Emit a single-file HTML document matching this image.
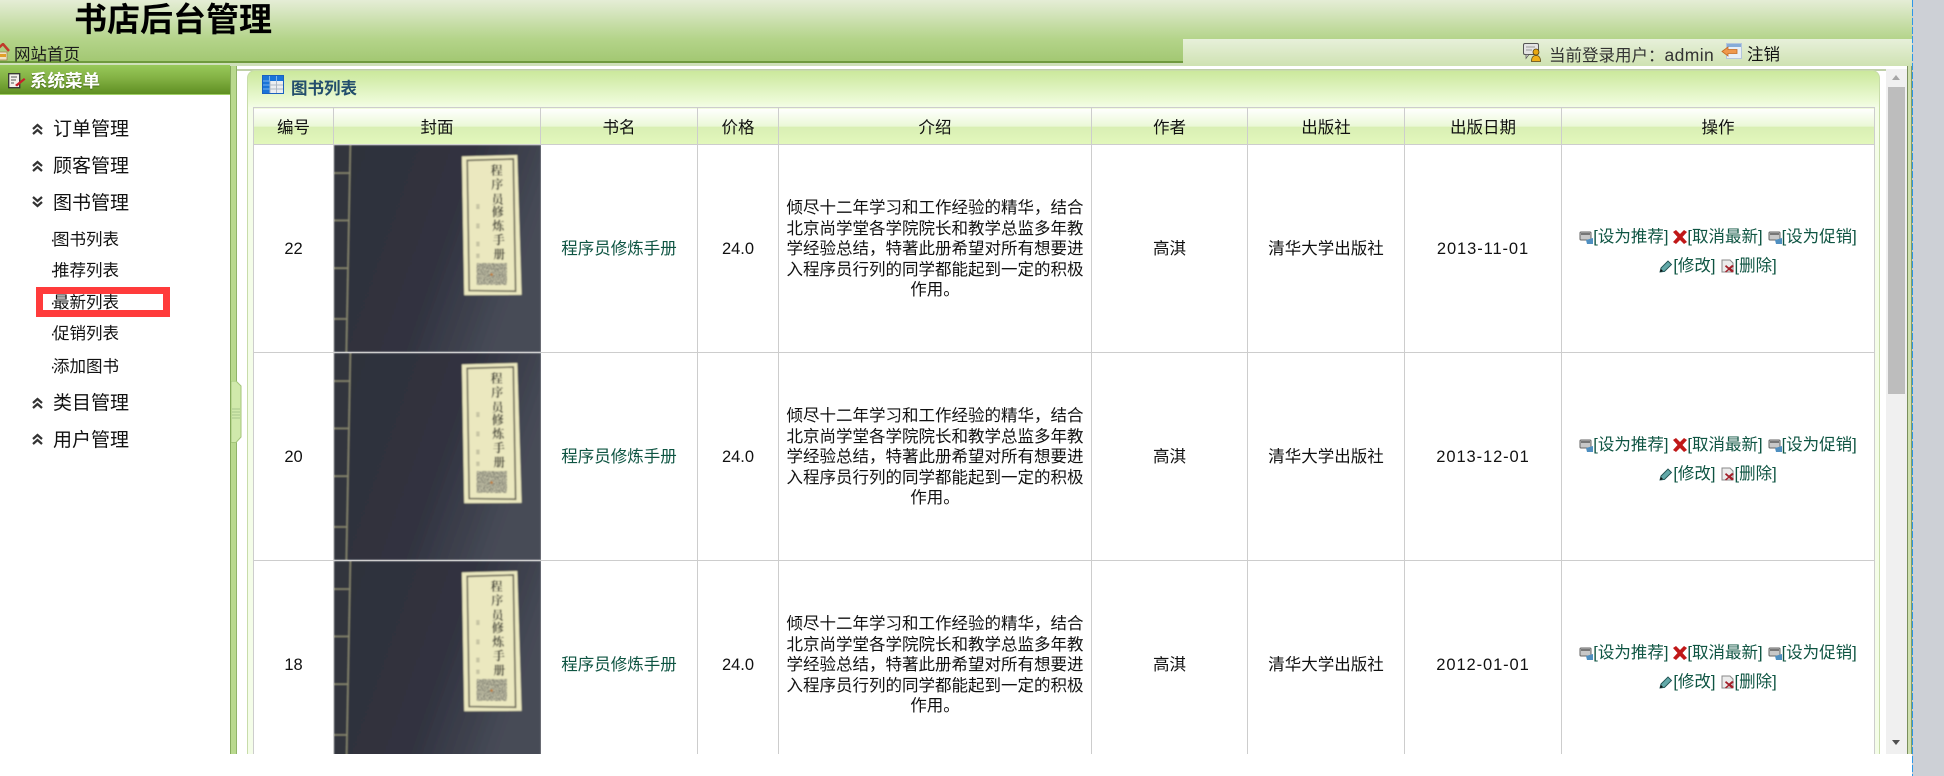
<!DOCTYPE html>
<html lang="zh-CN">
<head>
<meta charset="utf-8">
<title>书店后台管理</title>
<style>
html,body{margin:0;padding:0;width:1944px;height:776px;overflow:hidden;background:#fff}
body{position:relative;font-family:"Liberation Sans","Noto Sans CJK SC",sans-serif;font-size:16.5px;color:#111}
.a{position:absolute}
.t{position:absolute;white-space:nowrap;line-height:24px}
#page{position:absolute;left:0;top:0;width:1913px;height:754px;overflow:hidden;background:#fff}
#tbl{position:absolute;left:253px;top:107px;border-collapse:collapse;table-layout:fixed;width:1621px}
#tbl th,#tbl td{border:1px solid #cdcdcd;text-align:center;padding:0;font-weight:400;white-space:nowrap}
#tbl th{height:36px;background:linear-gradient(#fff 0,#eaf8d6 50%,#d9efb4 51%,#e3f8bc 100%);color:#111}
#tbl td{height:205px;padding-top:2px;line-height:20.5px;background:#fff}
#tbl td.c{padding:0;height:207px;vertical-align:top}
#tbl td svg.cv{display:block;width:207px;height:207px}
#tbl a{color:#0e5442;text-decoration:none}
#tbl td.ops{line-height:29.5px;padding-top:7px;height:200px}
#tbl td.d{letter-spacing:.9px}
.ops svg{vertical-align:-2px}
.ops span{margin-left:5px}
.m{font-size:19px}
.s{font-size:16.5px}
.s b{font-weight:400;letter-spacing:-2.5px}
.chev{position:absolute;left:32px;width:11px;height:12px}
</style>
</head>
<body>
<svg width="0" height="0" style="position:absolute">
<defs>
<linearGradient id="cg" x1="0" y1="0" x2="1" y2="0.35">
<stop offset="0" stop-color="#2e303a"/><stop offset=".6" stop-color="#30323f"/><stop offset="1" stop-color="#474b57"/>
</linearGradient>
<filter id="bl" x="-5%" y="-5%" width="110%" height="110%"><feGaussianBlur stdDeviation="2"/></filter>
<filter id="qr" x="0" y="0" width="100%" height="100%">
<feTurbulence type="fractalNoise" baseFrequency=".3" numOctaves="2" seed="4"/>
<feColorMatrix values="0 0 0 0 .2 0 0 0 0 .2 0 0 0 0 .16 8 8 0 0 -7.500"/>
<feComposite in2="SourceGraphic" operator="over"/>
</filter>
<g id="cb">
<rect width="620" height="620" fill="url(#cg)"/>
<rect x="0" width="46" height="620" fill="#31343d"/>
<path d="M49 0L37 620" stroke="#8d8c72" stroke-width="4" fill="none"/>
<path d="M0 84H47M0 226H45M0 369H42M0 521H40" stroke="#8d8c72" stroke-width="4" fill="none"/>
<path d="M383 34L549 30L562 449L390 450Z" fill="#ebe8bf"/>
<path d="M399 46L537 42L544 438L405 436Z" fill="none" stroke="#6d6b58" stroke-width="5"/>
<rect x="427" y="354" width="90" height="64" fill="#c8c6aa" filter="url(#qr)"/>
<circle cx="472" cy="388" r="4" fill="#c17a30"/>
<path d="M431 178v14M431 236v14M431 290v14M431 326v12" stroke="#aaa88e" stroke-width="10" stroke-dasharray="3 2"/>
</g>
<g id="ibk"><rect x="1" y="2" width="11" height="8" rx="1" fill="#c8c8c8" stroke="#666"/><rect x="2" y="3" width="9" height="2" fill="#777"/><path d="M7 10l7-2v6H8z" fill="#4f8fc0"/></g>
<g id="ix"><path d="M0 2L3 0l4 4 4-4 3 2-4.500 5L14 12l-3 2-4-4-4 4-3-2 4.500-5z" fill="#c01818"/></g>
<g id="ied"><path d="M1 13l1-4L9 2l3.500 3.500L5.500 12.500z" fill="#63a9a9" stroke="#1c4f4f" stroke-width=".9"/><path d="M1 13l1-3 2 2z" fill="#111"/></g>
<g id="idl"><path d="M1 1h8l3 3v9H1z" fill="#ececec" stroke="#888"/><path d="M5 6l3 2.500L11 6l2 1-3 2.500L13 12l-2 1.500-3-2.500-3 2.500-1-1 3-2.500-3-2.500z" fill="#a3202a"/></g>
</defs>
</svg>

<div id="page">
  <!-- header -->
  <div class="a" style="left:0;top:0;width:1913px;height:62px;background:linear-gradient(#e5edd6 0,#b4d48a 39px,#a3c873 61px)"></div>
  <div class="a" style="left:0;top:61px;width:1183px;height:2px;background:#6f9a3e"></div>
  <div class="a" style="left:0;top:63px;width:1183px;height:3px;background:#cfe0ba"></div>
  <div class="a" style="left:1183px;top:39px;width:730px;height:27px;background:linear-gradient(#e7f0da,#cfe2b2)"></div>
  <div class="a" style="left:0;top:66px;width:1913px;height:3px;background:#fff"></div>
  <div class="a" style="left:230px;top:69px;width:1683px;height:2px;background:#bfcfa8"></div>
  <div class="t" style="left:74px;top:0;font-size:33px;line-height:40px;font-weight:700;color:#000">书店后台管理</div>
  <svg class="a" style="left:0;top:43px" width="10" height="18" viewBox="0 0 10 18"><path d="M-6 9L3 1l6 7" fill="none" stroke="#c03a2a" stroke-width="2.500"/><rect x="-5" y="9" width="12" height="8" fill="#f0e4c4" stroke="#9a7a40" stroke-width=".7"/><rect x="0" y="11" width="6" height="3" fill="#e0a028"/></svg>
  <div class="a" style="left:14px;top:43px;width:70px;height:20px;overflow:hidden"><div class="t" style="left:0;top:0;color:#1a1a1a">网站首页</div></div>
  <!-- user -->
  <svg class="a" style="left:1523px;top:43px" width="20" height="19" viewBox="0 0 20 19"><rect x=".5" y=".5" width="15" height="11" rx="1.500" fill="#e4e4e4" stroke="#555"/><path d="M3 11.500v4l3-4z" fill="#ddd" stroke="#555" stroke-width=".7"/><path d="M3 4h9M3 7h6" stroke="#9a9a9a"/><circle cx="13" cy="9" r="3" fill="#e8a814" stroke="#5a4410" stroke-width=".8"/><path d="M8.500 18.500c0-4.500 1.500-6 4.500-6s4.500 1.500 4.500 6z" fill="#f0b018" stroke="#5a4410" stroke-width=".8"/></svg>
  <div class="t" style="left:1549px;top:43px;color:#333">当前登录用户&#xFF1A;<span style="font-size:17.5px;letter-spacing:.4px">admin</span></div>
  <svg class="a" style="left:1721px;top:43px" width="21" height="17" viewBox="0 0 21 17"><rect x="5.500" y=".5" width="15" height="15" fill="#e8eff7" stroke="#b4c6dc"/><rect x="6" y="1" width="14" height="3" fill="#86acd8"/><path d="M1 8.500l6-4.500v2.500h9v4H7V13z" fill="#f0984c" stroke="#c46a20" stroke-width=".8"/></svg>
  <div class="t" style="left:1747px;top:43px;color:#111">注销</div>

  <!-- sidebar -->
  <div class="a" style="left:0;top:65px;width:230px;height:29px;background:linear-gradient(#98c95a,#83b144 45%,#5f8f22);border-bottom:1px solid #a1d065"></div>
  <svg class="a" style="left:8px;top:73px" width="18" height="16" viewBox="0 0 18 16"><rect x=".7" y=".7" width="11" height="14" fill="#f4f2ec" stroke="#333" stroke-width="1.300"/><path d="M3 4h6M3 7h5M3 10h3" stroke="#555"/><path d="M7 12l9-7 1.500 1.500L9 13.500z" fill="#c8202a"/></svg>
  <div class="t" style="left:30px;top:69px;color:#fff;font-weight:700;font-size:17.500px;text-shadow:0 1px 1px #4a6c1a">系统菜单</div>

  <svg class="chev" style="top:123px" viewBox="0 0 11 12"><path d="M1 6l4.500-4L10 6M1 11l4.500-4L10 11" fill="none" stroke="#333" stroke-width="2.200"/></svg>
  <div class="t m" style="left:53px;top:118px">订单管理</div>
  <svg class="chev" style="top:160px" viewBox="0 0 11 12"><path d="M1 6l4.500-4L10 6M1 11l4.500-4L10 11" fill="none" stroke="#333" stroke-width="2.200"/></svg>
  <div class="t m" style="left:53px;top:155px">顾客管理</div>
  <svg class="chev" style="top:196px" viewBox="0 0 11 12"><path d="M1 1l4.500 4L10 1M1 6l4.500 4L10 6" fill="none" stroke="#333" stroke-width="2.200"/></svg>
  <div class="t m" style="left:53px;top:192px">图书管理</div>

  <div class="a" style="left:36px;top:287px;width:120px;height:16px;border:7px solid #ff3b3b;background:#fff"></div>

  <div class="t s" style="left:50px;top:228px"><b>·</b>图书列表</div>
  <div class="t s" style="left:50px;top:259px"><b>·</b>推荐列表</div>
  <div class="t s" style="left:50px;top:291px"><b>·</b>最新列表</div>
  <div class="t s" style="left:50px;top:322px"><b>·</b>促销列表</div>
  <div class="t s" style="left:50px;top:355px"><b>·</b>添加图书</div>

  <svg class="chev" style="top:397px" viewBox="0 0 11 12"><path d="M1 6l4.500-4L10 6M1 11l4.500-4L10 11" fill="none" stroke="#333" stroke-width="2.200"/></svg>
  <div class="t m" style="left:53px;top:392px">类目管理</div>
  <svg class="chev" style="top:433px" viewBox="0 0 11 12"><path d="M1 6l4.500-4L10 6M1 11l4.500-4L10 11" fill="none" stroke="#333" stroke-width="2.200"/></svg>
  <div class="t m" style="left:53px;top:429px">用户管理</div>

  <!-- splitter -->
  <div class="a" style="left:230px;top:66px;width:1px;height:688px;background:#86ab5c"></div>
  <div class="a" style="left:231px;top:66px;width:5px;height:688px;background:#b9d98e"></div>
  <div class="a" style="left:236px;top:66px;width:1px;height:688px;background:#8fb368"></div>
  <svg class="a" style="left:231px;top:381px" width="11" height="64" viewBox="0 0 11 64"><path d="M0 0H5L10 5V56L5 61.500H0Z" fill="#d0e9ab" stroke="#a4c67a"/><path d="M1 28H9M1 31H9M1 34H9M1 37H9" stroke="#a9c68c"/></svg>

  <!-- panel -->
  <div class="a" style="left:247px;top:70px;width:1633px;height:700px;box-sizing:border-box;border:1px solid #c8dcaa;border-bottom:0;border-radius:8px 8px 0 0;background:linear-gradient(#cbe89c 0,#ecfad6 30px,#f4fde8 37px,#f4fde8 100%)"></div>
  <svg class="a" style="left:262px;top:75px" width="22" height="19" viewBox="0 0 22 19"><rect x=".5" y=".5" width="21" height="18" fill="#1a74d8" stroke="#1a60c0"/><rect x="8" y="6" width="13" height="12" fill="#eceef0"/><path d="M8 6V18M14.500 6V18M8 10H21M8 14H21" stroke="#aeb8c4"/><path d="M1 6H8M1 10H8M1 14H8M7.500 1V6M14.500 1V6" stroke="#7cb4ee"/></svg>
  <div class="t" style="left:291px;top:77px;font-weight:700;color:#234e6c">图书列表</div>

  <table id="tbl">
    <colgroup><col style="width:80px"><col style="width:207px"><col style="width:157px"><col style="width:81px"><col style="width:313px"><col style="width:156px"><col style="width:157px"><col style="width:157px"><col style="width:313px"></colgroup>
    <tr><th>编号</th><th>封面</th><th>书名</th><th>价格</th><th>介绍</th><th>作者</th><th>出版社</th><th>出版日期</th><th>操作</th></tr>
    <tr>
      <td>22</td>
      <td class="c"><svg class="cv" viewBox="0 0 620 620"><g filter="url(#bl)"><use href="#cb"/><g font-family="'Noto Serif CJK SC',serif" font-size="36" font-weight="700" fill="#3a3a30" text-anchor="middle"><text x="487" y="88">程</text><text x="489" y="130">序</text><text x="490" y="175">员</text><text x="491" y="212">修</text><text x="492" y="255">炼</text><text x="494" y="296">手</text><text x="495" y="340">册</text></g></g></svg></td>
      <td><a>程序员修炼手册</a></td>
      <td>24.0</td>
      <td>倾尽十二年学习和工作经验的精华&#xFF0C;结合<br>北京尚学堂各学院院长和教学总监多年教<br>学经验总结&#xFF0C;特著此册希望对所有想要进<br>入程序员行列的同学都能起到一定的积极<br>作用。</td>
      <td>高淇</td>
      <td>清华大学出版社</td>
      <td class="d">2013-11-01</td>
      <td class="ops"><a><svg width="14" height="14" viewBox="0 0 14 14"><use href="#ibk"/></svg>[设为推荐]</a><span></span><a><svg width="14" height="14" viewBox="0 0 14 14"><use href="#ix"/></svg>[取消最新]</a><span></span><a><svg width="14" height="14" viewBox="0 0 14 14"><use href="#ibk"/></svg>[设为促销]</a><br><a><svg width="14" height="14" viewBox="0 0 14 14"><use href="#ied"/></svg>[修改]</a><span></span><a><svg width="14" height="14" viewBox="0 0 14 14"><use href="#idl"/></svg>[删除]</a></td>
    </tr>
    <tr>
      <td>20</td>
      <td class="c"><svg class="cv" viewBox="0 0 620 620"><g filter="url(#bl)"><use href="#cb"/><g font-family="'Noto Serif CJK SC',serif" font-size="36" font-weight="700" fill="#3a3a30" text-anchor="middle"><text x="487" y="88">程</text><text x="489" y="130">序</text><text x="490" y="175">员</text><text x="491" y="212">修</text><text x="492" y="255">炼</text><text x="494" y="296">手</text><text x="495" y="340">册</text></g></g></svg></td>
      <td><a>程序员修炼手册</a></td>
      <td>24.0</td>
      <td>倾尽十二年学习和工作经验的精华&#xFF0C;结合<br>北京尚学堂各学院院长和教学总监多年教<br>学经验总结&#xFF0C;特著此册希望对所有想要进<br>入程序员行列的同学都能起到一定的积极<br>作用。</td>
      <td>高淇</td>
      <td>清华大学出版社</td>
      <td class="d">2013-12-01</td>
      <td class="ops"><a><svg width="14" height="14" viewBox="0 0 14 14"><use href="#ibk"/></svg>[设为推荐]</a><span></span><a><svg width="14" height="14" viewBox="0 0 14 14"><use href="#ix"/></svg>[取消最新]</a><span></span><a><svg width="14" height="14" viewBox="0 0 14 14"><use href="#ibk"/></svg>[设为促销]</a><br><a><svg width="14" height="14" viewBox="0 0 14 14"><use href="#ied"/></svg>[修改]</a><span></span><a><svg width="14" height="14" viewBox="0 0 14 14"><use href="#idl"/></svg>[删除]</a></td>
    </tr>
    <tr>
      <td>18</td>
      <td class="c"><svg class="cv" viewBox="0 0 620 620"><g filter="url(#bl)"><use href="#cb"/><g font-family="'Noto Serif CJK SC',serif" font-size="36" font-weight="700" fill="#3a3a30" text-anchor="middle"><text x="487" y="88">程</text><text x="489" y="130">序</text><text x="490" y="175">员</text><text x="491" y="212">修</text><text x="492" y="255">炼</text><text x="494" y="296">手</text><text x="495" y="340">册</text></g></g></svg></td>
      <td><a>程序员修炼手册</a></td>
      <td>24.0</td>
      <td>倾尽十二年学习和工作经验的精华&#xFF0C;结合<br>北京尚学堂各学院院长和教学总监多年教<br>学经验总结&#xFF0C;特著此册希望对所有想要进<br>入程序员行列的同学都能起到一定的积极<br>作用。</td>
      <td>高淇</td>
      <td>清华大学出版社</td>
      <td class="d">2012-01-01</td>
      <td class="ops"><a><svg width="14" height="14" viewBox="0 0 14 14"><use href="#ibk"/></svg>[设为推荐]</a><span></span><a><svg width="14" height="14" viewBox="0 0 14 14"><use href="#ix"/></svg>[取消最新]</a><span></span><a><svg width="14" height="14" viewBox="0 0 14 14"><use href="#ibk"/></svg>[设为促销]</a><br><a><svg width="14" height="14" viewBox="0 0 14 14"><use href="#ied"/></svg>[修改]</a><span></span><a><svg width="14" height="14" viewBox="0 0 14 14"><use href="#idl"/></svg>[删除]</a></td>
    </tr>
  </table>

  <!-- scrollbar -->
  <div class="a" style="left:1886px;top:69px;width:21px;height:685px;background:#f0f0f0"></div>
  <div class="a" style="left:1888px;top:87px;width:17px;height:307px;background:#bdbdbd"></div>
  <div class="a" style="left:1892px;top:75px;width:0;height:0;border:4.500px solid transparent;border-top:0;border-bottom:5px solid #a6a6a6"></div>
  <div class="a" style="left:1892px;top:740px;width:0;height:0;border:4.500px solid transparent;border-bottom:0;border-top:5px solid #505050"></div>
  <div class="a" style="left:1907px;top:66px;width:1px;height:688px;background:#7a8e5c"></div>
  <div class="a" style="left:1908px;top:66px;width:3px;height:688px;background:#cfe0b0"></div>
  <div class="a" style="left:1911px;top:66px;width:1px;height:688px;background:#87a060"></div>
</div>

<!-- outside window -->
<div class="a" style="left:1913px;top:0;width:31px;height:776px;background:#cdd0d6"></div>
<div class="a" style="left:1912px;top:0;width:1px;height:776px;background:repeating-linear-gradient(#2d96e8 0 7px,#c4ccd4 7px 9px)"></div>
</body>
</html>
